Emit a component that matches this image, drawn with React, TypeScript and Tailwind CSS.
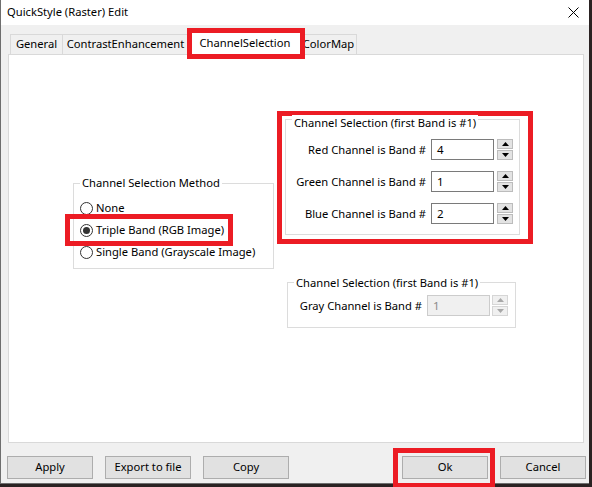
import React from "react";

const font = { fontFamily: '"Noto Sans", "Open Sans", sans-serif' };

function SpinArrow({ up, disabled }: { up: boolean; disabled?: boolean }) {
  return (
    <div
      className={`flex-1 flex items-center justify-center border ${
        disabled ? "border-[#d6d6d6] bg-[#f0f0f0]" : "border-[#bcbcbc] bg-[#e3e3e3]"
      }`}
    >
      <svg width="7" height="4" viewBox="0 0 7 4">
        <path
          d={up ? "M3.5 0 L7 4 L0 4 Z" : "M0 0 L7 0 L3.5 4 Z"}
          fill={disabled ? "#a8a8a8" : "#000"}
        />
      </svg>
    </div>
  );
}

function Spinner({ disabled }: { disabled?: boolean }) {
  return (
    <div className="flex flex-col w-[16px] h-[21px] gap-px">
      <SpinArrow up disabled={disabled} />
      <SpinArrow up={false} disabled={disabled} />
    </div>
  );
}

function NumberRow({
  label,
  value,
  labelWidth,
  gap,
  disabled,
}: {
  label: string;
  value: string;
  labelWidth: string;
  gap: string;
  disabled?: boolean;
}) {
  return (
    <div className="flex items-center h-[21px]">
      <span className={`${labelWidth} text-right text-[11.2px] leading-[16px] text-black whitespace-nowrap`}>
        {label}
      </span>
      <div
        className={`ml-[5px] w-[63px] h-[21px] flex items-center pl-[5px] text-[11.5px] border ${
          disabled ? "border-[#cccccc] bg-[#f0f0f0] text-[#8a8a8a]" : "border-[#7a7a7a] bg-white text-black"
        }`}
      >
        {value}
      </div>
      <div className={gap}>
        <Spinner disabled={disabled} />
      </div>
    </div>
  );
}

function Radio({ label, checked }: { label: string; checked?: boolean }) {
  return (
    <div className="flex items-center h-[22px] gap-[3px]">
      <span className="w-[13px] h-[13px] rounded-full border border-[#333333] bg-white flex items-center justify-center">
        {checked && <span className="w-[7px] h-[7px] rounded-full bg-[#333333]" />}
      </span>
      <span className="text-[11.2px] leading-[16px] text-black whitespace-nowrap">{label}</span>
    </div>
  );
}

function Tab({ label, width }: { label: string; width: string }) {
  return (
    <div
      className={`${width} h-[20px] -ml-px first:ml-0 flex items-center justify-center border-t border-l border-r border-[#d9d9d9] bg-[#f0f0f0] text-[11.2px] text-black whitespace-nowrap`}
    >
      {label}
    </div>
  );
}

function Button({ label }: { label: string }) {
  return (
    <div className="w-[86px] h-[23px] flex items-center justify-center border border-[#adadad] bg-[#e1e1e1] text-[11.2px] text-black">
      {label}
    </div>
  );
}

export default function App() {
  return (
    <div className="w-[592px] h-[487px] bg-[#2a2222] overflow-hidden" style={font}>
      <div className="w-[589px] h-[484px] bg-[#f0f0f0] border-l border-b border-[#6e6e6e] flex flex-col">
        {/* title bar */}
        <div className="h-[25px] bg-white flex items-center justify-between pl-[6px] pr-[10px]">
          <span className="text-[11.2px] text-black">QuickStyle (Raster) Edit</span>
          <svg width="11" height="11" viewBox="0 0 11 11">
            <path d="M0.5 0.5 L10.5 10.5 M10.5 0.5 L0.5 10.5" stroke="#000" strokeWidth="1" />
          </svg>
        </div>

        {/* tab strip */}
        <div className="flex items-end h-[23px] mt-[6px] ml-[9px]">
          <Tab label="General" width="w-[53px]" />
          <Tab label="ContrastEnhancement" width="w-[127px]" />
          <div className="relative z-10 w-[116px] h-[24px] -ml-[2px] -mr-[2px] -mb-px flex items-center justify-center border-t border-l border-r border-[#d9d9d9] bg-white text-[11.2px] text-black whitespace-nowrap">
            ChannelSelection
            <span className="absolute -left-[1px] -top-[4px] w-[118px] h-[31px] border-[5px] border-[#ec1c24]" />
          </div>
          <Tab label="ColorMap" width="w-[57px]" />
        </div>

        {/* tab page */}
        <div className="ml-[7px] w-[576px] h-[389px] bg-white border border-[#d9d9d9] flex items-start">
          {/* channel selection method */}
          <div className="relative ml-[64px] mt-[128px] w-[201px] h-[86px] border border-[#dcdcdc] pt-[13px] pl-[6px]">
            <span className="absolute left-[6px] -top-[9px] px-[2px] bg-white text-[11.2px] leading-[16px] text-black whitespace-nowrap">
              Channel Selection Method
            </span>
            <Radio label="None" />
            <div className="relative">
              <Radio label="Triple Band (RGB Image)" checked />
              <span className="absolute -left-[15px] -top-[5px] w-[168px] h-[32px] border-[5px] border-[#ec1c24]" />
            </div>
            <Radio label="Single Band (Grayscale Image)" />
          </div>

          {/* right column */}
          <div className="ml-[3px] mt-[56px] flex flex-col">
            <div className="w-[256px] h-[133px] border-[5px] border-[#ec1c24] pl-[3px] pt-[3px]">
              <div className="relative w-[235px] h-[116px] border border-[#dcdcdc] pt-[19px] flex flex-col gap-[11px]">
                <span className="absolute left-[6px] -top-[5px] px-[2px] bg-white text-[11.2px] leading-[16px] text-black whitespace-nowrap">
                  Channel Selection (first Band is #1)
                </span>
                <NumberRow label="Red Channel is Band #" value="4" labelWidth="w-[140px]" gap="ml-[3px]" />
                <NumberRow label="Green Channel is Band #" value="1" labelWidth="w-[140px]" gap="ml-[3px]" />
                <NumberRow label="Blue Channel is Band #" value="2" labelWidth="w-[140px]" gap="ml-[3px]" />
              </div>
            </div>

            <div className="relative ml-[10px] mt-[38px] w-[229px] h-[46px] border border-[#dcdcdc] pt-[12px]">
              <span className="absolute left-[6px] -top-[8px] px-[2px] bg-white text-[11.2px] leading-[16px] text-black whitespace-nowrap">
                Channel Selection (first Band is #1)
              </span>
              <NumberRow label="Gray Channel is Band #" value="1" labelWidth="w-[134px]" gap="ml-[2px]" disabled />
            </div>
          </div>
        </div>

        {/* dialog buttons */}
        <div className="flex items-center mt-[13px] ml-[6px]">
          <div className="flex gap-[12px]">
            <Button label="Apply" />
            <Button label="Export to file" />
            <Button label="Copy" />
          </div>
          <div className="flex gap-[12px] ml-[113px]">
            <div className="relative">
              <Button label="Ok" />
              <span className="absolute -left-[9px] -top-[8px] w-[102px] h-[40px] border-[5px] border-[#ec1c24]" />
            </div>
            <Button label="Cancel" />
          </div>
        </div>
      </div>
    </div>
  );
}
